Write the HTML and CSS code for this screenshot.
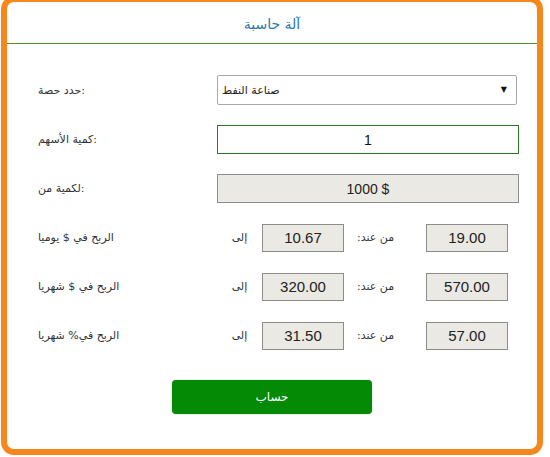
FILE: index.html
```html
<!DOCTYPE html>
<html lang="ar">
<head>
<meta charset="utf-8">
<title>آلة حاسبة</title>
<link rel="stylesheet" href="styles.css">
</head>
<body>
<div class="calc">
  <div class="calc-head">آلة حاسبة</div>
  <div class="calc-body">
    <div class="row r-first">
      <label class="lbl"><span>حدد حصة</span><span>:</span></label>
      <div class="select-wrap">
        <select class="sel">
          <option>صناعة النفط</option>
        </select>
        <span class="arrow">▼</span>
      </div>
    </div>
    <div class="row">
      <label class="lbl"><span>كمية الأسهم</span><span>:</span></label>
      <input class="num" type="text" value="1">
    </div>
    <div class="row">
      <label class="lbl"><span>لكمية من</span><span>:</span></label>
      <div class="ro wide">1000 $</div>
    </div>
    <div class="row">
      <span class="lbl"><span>الربح في $ يوميا</span></span>
      <div class="range">
        <span class="to">إلى</span>
        <div class="ro box">10.67</div>
        <span class="from"><span>:</span><span>من عند</span></span>
        <div class="ro box">19.00</div>
      </div>
    </div>
    <div class="row">
      <span class="lbl"><span>الربح في $ شهريا</span></span>
      <div class="range">
        <span class="to">إلى</span>
        <div class="ro box">320.00</div>
        <span class="from"><span>:</span><span>من عند</span></span>
        <div class="ro box">570.00</div>
      </div>
    </div>
    <div class="row">
      <span class="lbl"><span>الربح في% شهريا</span></span>
      <div class="range">
        <span class="to">إلى</span>
        <div class="ro box">31.50</div>
        <span class="from"><span>:</span><span>من عند</span></span>
        <div class="ro box">57.00</div>
      </div>
    </div>
    <div class="actions">
      <button class="btn" type="button">حساب</button>
    </div>
  </div>
</div>
</body>
</html>
```

FILE: styles.css
```css
html, body {
  margin: 0;
  padding: 0;
  background: #ffffff;
}
body {
  font-family: "DejaVu Sans", "Liberation Sans", sans-serif;
  color: #222;
}
.calc {
  box-sizing: border-box;
  width: 542px;
  height: 459px;
  margin: -4px 0 0 1px;
  border: 6px solid #f7861c;
  border-radius: 13px;
  background: #fff;
}
.calc-head {
  height: 42px;
  line-height: 40px;
  padding-top: 2px;
  box-sizing: border-box;
  border-bottom: 1px solid #4f8f25;
  text-align: center;
  color: #2779ad;
  font-size: 14px;
}
.calc-body {
  padding: 31px 0 0 31px;
  display: flex;
  flex-direction: column;
  gap: 20px;
}
.row {
  display: grid;
  grid-template-columns: 179px 302px;
  align-items: center;
  height: 29px;
}
.r-first {
  height: 30px;
}
.lbl {
  display: flex;
  font-size: 11px;
  color: #333;
}
.select-wrap {
  position: relative;
  width: 300px;
  height: 30px;
}
.sel {
  appearance: none;
  -webkit-appearance: none;
  width: 300px;
  height: 30px;
  box-sizing: border-box;
  border: 1px solid #a9a9a9;
  border-radius: 2px;
  background: #fff;
  font-family: "DejaVu Sans", sans-serif;
  font-size: 11px;
  color: #222;
  padding: 0 4px;
  direction: ltr;
  text-align: left;
}
.arrow {
  position: absolute;
  right: 10px;
  top: 10px;
  font-size: 8px;
  color: #111;
  pointer-events: none;
}
.num {
  box-sizing: border-box;
  width: 302px;
  height: 29px;
  border: 1px solid #2a7a2a;
  border-radius: 0;
  text-align: center;
  font-family: "Liberation Sans", Arial, sans-serif;
  font-size: 14px;
  color: #111;
  padding: 0;
  outline: none;
}
.ro {
  box-sizing: border-box;
  height: 29px;
  border: 1px solid #8c8c8c;
  background: #ebe9e4;
  font-family: "Liberation Sans", Arial, sans-serif;
  font-size: 15px;
  color: #222;
  display: flex;
  align-items: center;
  justify-content: center;
}
.ro.wide {
  width: 302px;
  font-size: 14px;
}
.range {
  display: flex;
  align-items: center;
  height: 29px;
}
.box {
  width: 82px;
  height: 28px;
}
.to {
  width: 45px;
  text-align: center;
  font-size: 11px;
  color: #333;
}
.from {
  display: flex;
  width: 69px;
  padding-left: 13px;
  font-size: 11px;
  color: #333;
}
.actions {
  display: flex;
  justify-content: center;
  padding-right: 31px;
  margin-top: 10px;
}
.btn {
  width: 200px;
  height: 34px;
  border: none;
  border-radius: 4px;
  background: #058a05;
  color: #fff;
  font-family: "DejaVu Sans", sans-serif;
  font-size: 12px;
  box-shadow: 0 0 2px rgba(0,0,0,0.25);
}
```
